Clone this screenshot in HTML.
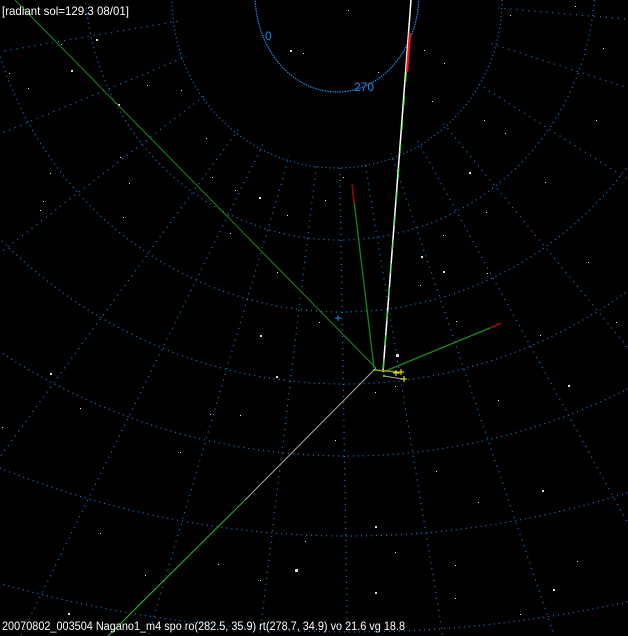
<!DOCTYPE html>
<html><head><meta charset="utf-8"><style>
html,body{margin:0;padding:0;background:#000;width:628px;height:636px;overflow:hidden}
svg{display:block;overflow:hidden}
text{font-family:"Liberation Sans","Noto Sans CJK JP",sans-serif}
</style></head><body>
<svg width="628" height="636" viewBox="0 0 628 636" xmlns="http://www.w3.org/2000/svg">
<defs>
<mask id="m"><rect x="-500" y="-500" width="1700" height="1700" fill="#fff"/><ellipse cx="337" cy="0" rx="160" ry="163" fill="#000"/></mask>
</defs>
<rect width="628" height="636" fill="#000"/>
<g fill="none" stroke="#0a84e0" stroke-width="1.2">
<ellipse cx="337" cy="-6" rx="82" ry="98" stroke-dasharray="1.5 1" stroke="#1a8ce8"/>
<ellipse cx="337" cy="0" rx="165" ry="168" stroke-dasharray="1 3"/>
<ellipse cx="340" cy="-20" rx="255" ry="260" stroke-dasharray="1 4"/>
<ellipse cx="342" cy="-60" rx="360" ry="372" stroke-dasharray="1 4"/>
<ellipse cx="344" cy="-120" rx="490" ry="504" stroke-dasharray="1 4"/>
<ellipse cx="346" cy="-200" rx="640" ry="656" stroke-dasharray="1 4"/>
<ellipse cx="348" cy="-420" rx="940" ry="956" stroke-dasharray="1 4"/>
<ellipse cx="350" cy="-700" rx="1310" ry="1332" stroke-dasharray="1 4"/>
</g>
<g stroke="#0a84e0" stroke-width="1.2" stroke-dasharray="1 5" mask="url(#m)">
<line x1="337" y1="-6" x2="-400" y2="300"/>
<line x1="337" y1="-6" x2="-400" y2="560"/>
<line x1="337" y1="-6" x2="-250" y2="800"/>
<line x1="337" y1="-6" x2="-60" y2="800"/>
<line x1="337" y1="-6" x2="100" y2="800"/>
<line x1="337" y1="-6" x2="240" y2="800"/>
<line x1="337" y1="-6" x2="350" y2="800"/>
<line x1="337" y1="-6" x2="470" y2="800"/>
<line x1="337" y1="-6" x2="610" y2="800"/>
<line x1="337" y1="-6" x2="780" y2="800"/>
<line x1="337" y1="-6" x2="1000" y2="800"/>
<line x1="337" y1="-6" x2="1100" y2="480"/>
<line x1="337" y1="-6" x2="1100" y2="240"/>
<line x1="337" y1="-6" x2="-400" y2="120"/>
<line x1="337" y1="-6" x2="1100" y2="60"/>
</g>
<g fill="#ddd">
<rect x="96" y="39" width="2" height="2"/><rect x="71" y="70" width="2" height="2"/><rect x="118" y="104" width="2" height="2"/>
<rect x="61" y="44" width="1" height="1"/><rect x="9" y="73" width="1" height="1"/><rect x="28" y="88" width="1" height="1"/>
<rect x="129" y="183" width="1" height="1"/><rect x="206" y="138" width="1" height="1"/><rect x="303" y="53" width="1" height="1"/>
<rect x="259" y="197" width="2" height="2"/><rect x="230" y="233" width="1" height="1"/><rect x="212" y="177" width="1" height="1"/>
<rect x="50" y="173" width="1" height="1"/><rect x="40" y="210" width="1" height="1"/><rect x="43" y="201" width="1" height="1"/>
<rect x="123" y="217" width="1" height="1"/><rect x="235" y="190" width="1" height="1"/><rect x="287" y="215" width="1" height="1"/>
<rect x="325" y="200" width="1" height="1"/><rect x="343" y="177" width="1" height="1"/><rect x="277" y="272" width="1" height="1"/>
<rect x="260" y="335" width="2" height="2"/><rect x="319" y="322" width="1" height="1"/><rect x="276" y="376" width="2" height="2"/>
<rect x="210" y="414" width="1" height="1"/><rect x="240" y="415" width="1" height="1"/><rect x="50" y="373" width="2" height="2"/>
<rect x="2" y="427" width="1" height="1"/><rect x="80" y="408" width="1" height="1"/><rect x="180" y="452" width="1" height="1"/>
<rect x="100" y="533" width="1" height="1"/><rect x="68" y="613" width="2" height="2"/><rect x="145" y="575" width="1" height="1"/>
<rect x="218" y="564" width="1" height="1"/><rect x="260" y="580" width="1" height="1"/><rect x="295" y="569" width="3" height="3"/>
<rect x="305" y="541" width="1" height="1"/><rect x="335" y="440" width="1" height="1"/><rect x="375" y="392" width="1" height="1"/>
<rect x="395" y="386" width="1" height="1"/><rect x="375" y="592" width="2" height="2"/><rect x="375" y="526" width="2" height="2"/>
<rect x="395" y="552" width="1" height="1"/><rect x="396" y="354" width="3" height="3"/><rect x="420" y="285" width="1" height="1"/>
<rect x="443" y="271" width="2" height="2"/><rect x="421" y="256" width="2" height="2"/><rect x="443" y="235" width="1" height="1"/>
<rect x="487" y="273" width="1" height="1"/><rect x="469" y="172" width="2" height="2"/><rect x="484" y="120" width="1" height="1"/>
<rect x="432" y="101" width="1" height="1"/><rect x="378" y="72" width="1" height="1"/><rect x="348" y="10" width="1" height="1"/>
<rect x="424" y="50" width="1" height="1"/><rect x="444" y="63" width="1" height="1"/><rect x="505" y="133" width="1" height="1"/>
<rect x="545" y="182" width="1" height="1"/><rect x="588" y="262" width="1" height="1"/><rect x="596" y="120" width="1" height="1"/>
<rect x="616" y="322" width="1" height="1"/><rect x="568" y="385" width="2" height="2"/><rect x="542" y="490" width="2" height="2"/>
<rect x="553" y="589" width="2" height="2"/><rect x="577" y="561" width="1" height="1"/><rect x="520" y="614" width="1" height="1"/>
<rect x="455" y="598" width="1" height="1"/><rect x="478" y="502" width="1" height="1"/><rect x="455" y="565" width="1" height="1"/>
<rect x="498" y="400" width="1" height="1"/><rect x="540" y="335" width="1" height="1"/><rect x="436" y="471" width="1" height="1"/>
<rect x="456" y="321" width="1" height="1"/><rect x="486" y="212" width="1" height="1"/><rect x="603" y="48" width="1" height="1"/>
<rect x="575" y="6" width="1" height="1"/><rect x="510" y="15" width="1" height="1"/><rect x="290" y="50" width="2" height="2"/>
<rect x="147" y="85" width="1" height="1"/><rect x="181" y="90" width="1" height="1"/><rect x="120" y="157" width="1" height="1"/>
</g>
<text x="265" y="40" font-size="12" fill="#1a8ce8">0</text>
<text x="354" y="91" font-size="12" fill="#1a8ce8">270</text>
<line x1="15" y1="0" x2="376" y2="368" stroke="#1c8a1c" stroke-width="1"/>
<line x1="376" y1="368" x2="245" y2="500" stroke="#b0b0b0" stroke-width="1"/>
<line x1="245" y1="500" x2="108" y2="636" stroke="#22c022" stroke-width="1"/>
<line x1="352" y1="184" x2="374" y2="368" stroke="#118811" stroke-width="1.3"/>
<line x1="352" y1="184" x2="354" y2="203" stroke="#990000" stroke-width="1.5"/>
<line x1="383" y1="372" x2="490" y2="328" stroke="#1a8a1a" stroke-width="1.3"/>
<line x1="490" y1="328" x2="501" y2="323" stroke="#990000" stroke-width="2"/>
<line x1="411" y1="0" x2="383" y2="372" stroke="#ffffff" stroke-width="1.5"/>
<line x1="406.5" y1="72" x2="383" y2="372" stroke="#22dd22" stroke-width="1" stroke-dasharray="10 14"/>
<line x1="410" y1="33" x2="407" y2="72" stroke="#ff1010" stroke-width="2.2"/>
<line x1="375" y1="370" x2="398" y2="372" stroke="#9a9a00" stroke-width="1.5"/>
<line x1="384" y1="376" x2="403" y2="379" stroke="#aaaaaa" stroke-width="1"/>
<rect x="373" y="369" width="2" height="2" fill="#22dd22"/>
<rect x="383" y="375" width="2" height="2" fill="#22dd22"/>
<g stroke="#ffff00" stroke-width="1">
<path d="M393 373h6M396 370v6"/><path d="M398 372h6M401 369v6"/><path d="M401 379h6M404 376v6"/>
</g>
<path d="M335 318h6M338 315v6" stroke="#1a8ce8" stroke-width="1"/>
<text x="2" y="15" font-size="12" fill="#fff" textLength="127" lengthAdjust="spacingAndGlyphs">[radiant sol=129.3 08/01]</text>
<text x="2" y="630" font-size="12" fill="#fff" textLength="403" lengthAdjust="spacingAndGlyphs">20070802_003504 Nagano1_m4 spo ro(282.5, 35.9) rt(278.7, 34.9) vo 21.6 vg 18.8</text>
</svg>
</body></html>
